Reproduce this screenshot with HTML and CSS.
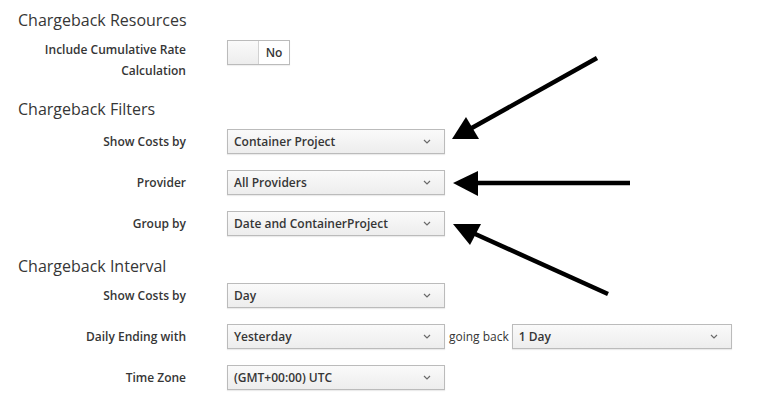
FILE: index.html
```html
<!DOCTYPE html>
<html lang="en">
<head>
<meta charset="utf-8">
<title>Chargeback</title>
<link rel="stylesheet" href="styles.css">
</head>
<body>
<div class="page">
  <section class="section sec-resources">
    <h2 class="heading">Chargeback Resources</h2>
    <div class="row">
      <div class="label label-multi">Include Cumulative Rate<br>Calculation</div>
      <div class="control">
        <div class="toggle"><span class="toggle-off"></span><span class="toggle-on">No</span></div>
      </div>
    </div>
  </section>

  <section class="section sec-filters">
    <h2 class="heading">Chargeback Filters</h2>
    <div class="row">
      <div class="label">Show Costs by</div>
      <div class="control"><div class="select"><span>Container Project</span><svg class="chev" width="8" height="5" viewBox="0 0 8 5"><path d="M1 1 L4 4 L7 1" fill="none" stroke="#6a6a6a" stroke-width="1.2"/></svg></div></div>
    </div>
    <div class="row">
      <div class="label">Provider</div>
      <div class="control"><div class="select"><span>All Providers</span><svg class="chev" width="8" height="5" viewBox="0 0 8 5"><path d="M1 1 L4 4 L7 1" fill="none" stroke="#6a6a6a" stroke-width="1.2"/></svg></div></div>
    </div>
    <div class="row">
      <div class="label">Group by</div>
      <div class="control"><div class="select"><span>Date and ContainerProject</span><svg class="chev" width="8" height="5" viewBox="0 0 8 5"><path d="M1 1 L4 4 L7 1" fill="none" stroke="#6a6a6a" stroke-width="1.2"/></svg></div></div>
    </div>
  </section>

  <section class="section sec-interval">
    <h2 class="heading">Chargeback Interval</h2>
    <div class="row">
      <div class="label">Show Costs by</div>
      <div class="control"><div class="select"><span>Day</span><svg class="chev" width="8" height="5" viewBox="0 0 8 5"><path d="M1 1 L4 4 L7 1" fill="none" stroke="#6a6a6a" stroke-width="1.2"/></svg></div></div>
    </div>
    <div class="row">
      <div class="label">Daily Ending with</div>
      <div class="control">
        <div class="select"><span>Yesterday</span><svg class="chev" width="8" height="5" viewBox="0 0 8 5"><path d="M1 1 L4 4 L7 1" fill="none" stroke="#6a6a6a" stroke-width="1.2"/></svg></div>
        <span class="inline-text">going back</span>
        <div class="select select-wide"><span>1 Day</span><svg class="chev" width="8" height="5" viewBox="0 0 8 5"><path d="M1 1 L4 4 L7 1" fill="none" stroke="#6a6a6a" stroke-width="1.2"/></svg></div>
      </div>
    </div>
    <div class="row">
      <div class="label">Time Zone</div>
      <div class="control"><div class="select"><span>(GMT+00:00) UTC</span><svg class="chev" width="8" height="5" viewBox="0 0 8 5"><path d="M1 1 L4 4 L7 1" fill="none" stroke="#6a6a6a" stroke-width="1.2"/></svg></div></div>
    </div>
  </section>

  <svg class="arrows" width="761" height="405" viewBox="0 0 761 405">
    <g stroke="#000" stroke-width="4.5" stroke-linecap="butt">
      <line x1="597" y1="58" x2="470" y2="129"/>
      <line x1="630" y1="183" x2="474" y2="183"/>
      <line x1="608" y1="294" x2="473" y2="233"/>
    </g>
    <g fill="#000">
      <polygon points="452,139 466,117 479,139"/>
      <polygon points="453,183 478,171 478,196"/>
      <polygon points="453,224 481,224 470,245"/>
    </g>
  </svg>
</div>
</body>
</html>
```

FILE: styles.css
```css
* { box-sizing: border-box; }
html, body { margin: 0; padding: 0; background: #fff; }
body {
  font-family: "Open Sans", "Liberation Sans", sans-serif;
  color: #363636;
  width: 761px;
  height: 405px;
  overflow: hidden;
}
.page {
  position: relative;
  padding-top: 10px;
}
.heading {
  margin: 0;
  padding-left: 18px;
  font-size: 16px;
  font-weight: 400;
  line-height: 20px;
  color: #363636;
}
.section { display: flex; flex-direction: column; }
.sec-resources .heading { margin-bottom: 10px; }
.sec-filters { margin-top: 18px; }
.sec-filters .heading { margin-bottom: 10px; }
.sec-interval { margin-top: 20px; }
.sec-interval .heading { margin-bottom: 7px; }

.row {
  display: grid;
  grid-template-columns: 186px auto;
  column-gap: 41px;
  align-items: center;
  min-height: 25px;
  margin-bottom: 16px;
}
.row:last-child { margin-bottom: 0; }
.sec-resources .row { align-items: start; }
.label {
  text-align: right;
  font-size: 12px;
  font-weight: 600;
  line-height: 21px;
  color: #363636;
}
.label-multi { margin-top: -1px; }
.control {
  display: flex;
  align-items: center;
}
.select {
  width: 218px;
  height: 25px;
  border: 1px solid #bbb;
  background: linear-gradient(#fafafa, #ededed);
  box-shadow: 0 1px 1px rgba(3, 3, 3, 0.08);
  display: flex;
  align-items: center;
  justify-content: space-between;
  padding: 0 13px 0 6px;
  font-size: 12px;
  font-weight: 600;
  color: #363636;
}
.select-wide { width: 220px; margin-left: 3px; }
.chev { display: block; }
.inline-text {
  font-size: 12px;
  margin-left: 4px;
  color: #363636;
}
.toggle {
  display: flex;
  width: 63px;
  height: 25px;
  border: 1px solid #bbb;
  box-shadow: 0 1px 1px rgba(3, 3, 3, 0.06);
}
.toggle-off {
  width: 31px;
  background: linear-gradient(#fafafa, #ededed);
  border-right: 1px solid #d1d1d1;
}
.toggle-on {
  flex: 1;
  background: #fff;
  font-size: 12px;
  font-weight: 600;
  display: flex;
  align-items: center;
  justify-content: center;
  color: #363636;
}
.arrows {
  position: absolute;
  left: 0;
  top: 0;
  pointer-events: none;
}
```
